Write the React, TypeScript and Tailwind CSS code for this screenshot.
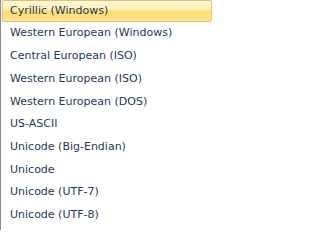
import React from "react";

const items = [
  "Cyrillic (Windows)",
  "Western European (Windows)",
  "Central European (ISO)",
  "Western European (ISO)",
  "Western European (DOS)",
  "US-ASCII",
  "Unicode (Big-Endian)",
  "Unicode",
  "Unicode (UTF-7)",
  "Unicode (UTF-8)",
];

export default function App() {
  return (
    <div className="w-[214px] h-[230px] bg-white border-l border-[#8a8a8a] overflow-hidden flex flex-col pl-px pr-[2px] text-[11px] text-[#1e395b] [font-family:'DejaVu_Sans',Verdana,sans-serif]">
      {items.map((t, i) => (
        <div key={t} className="h-[22.7px] shrink-0 flex flex-col">
          <div
            className={
              i === 0
                ? "h-[22px] flex items-center pl-[7px] rounded-[2px] border border-[#e0c46c] bg-[linear-gradient(to_bottom,#fff8dc_0%,#ffeeb0_45%,#ffdb70_50%,#ffe48e_100%)]"
                : "h-[22px] flex items-center pl-[7px] border border-transparent"
            }
          >
            {t}
          </div>
        </div>
      ))}
    </div>
  );
}
